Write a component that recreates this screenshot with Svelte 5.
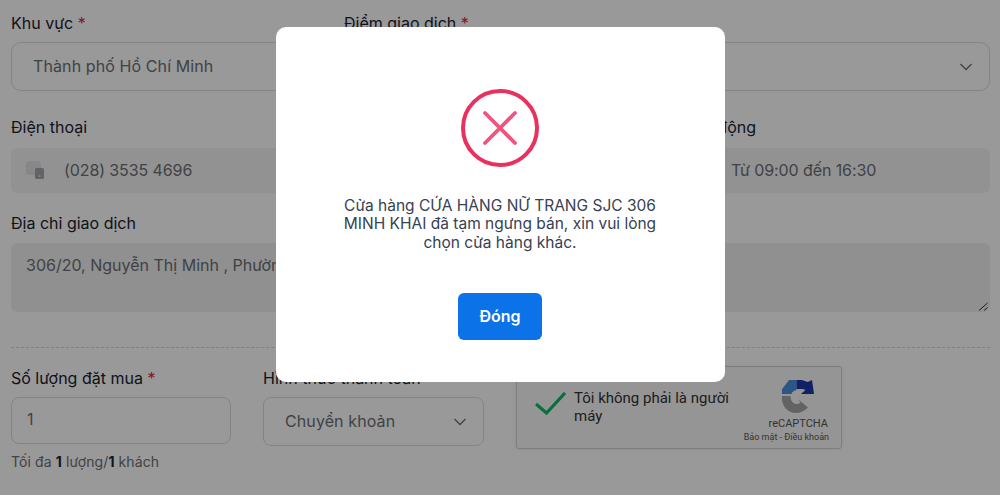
<script>
  let open = $state(true);
</script>

<style>
  :global(body) {
    background: #fff;
    font-family: Inter, "Noto Sans", sans-serif;
    color: #1f2937;
  }

  .form {
    padding: 11px 10px 0 11px;
  }

  .row {
    display: grid;
    grid-template-columns: repeat(3, 1fr);
    column-gap: 20px;
  }

  .row-phone {
    margin-top: 24px;
  }

  .row-address {
    margin-top: 18px;
  }

  .span-2 {
    grid-column: span 2;
  }

  label {
    display: block;
    font-size: 16px;
    line-height: 24px;
    color: #1a2230;
  }

  label span {
    color: #e11d48;
  }

  .select {
    position: relative;
    margin-top: 7px;
  }

  select {
    display: block;
    width: 100%;
    height: 49px;
    box-sizing: border-box;
    padding: 0 40px 2px 21px;
    appearance: none;
    background: #fff;
    border: 1px solid #dcdcdf;
    border-radius: 10px;
    font: 16px Inter, sans-serif;
    letter-spacing: 0.1px;
    color: #6c6e75;
  }

  .select svg {
    position: absolute;
    right: 17px;
    top: 50%;
    margin-top: -4px;
    pointer-events: none;
  }

  .static {
    display: flex;
    align-items: center;
    height: 45px;
    box-sizing: border-box;
    margin-top: 9px;
    padding: 0 0 2px 15px;
    border-radius: 6px;
    background: #f4f4f4;
    font-size: 16px;
    letter-spacing: -0.1px;
    color: #6c6e75;
  }

  .static svg {
    margin-right: 18px;
  }

  .no-icon {
    padding-left: 54px;
  }

  .area {
    position: relative;
    margin-top: 8px;
  }

  textarea {
    display: block;
    width: 100%;
    height: 69px;
    box-sizing: border-box;
    padding: 10px 15px;
    border: 0;
    border-radius: 6px;
    background: #f0f0f0;
    font: 16px/24px Inter, sans-serif;
    color: #6c6e75;
    resize: none;
  }

  .area svg {
    position: absolute;
    right: 1px;
    bottom: 1px;
    pointer-events: none;
  }

  .divider {
    margin: 35px 0 18px;
    border-top: 1px dashed #d4d4d6;
  }

  .row-order {
    display: grid;
    grid-template-columns: 220px 221px 326px;
    column-gap: 32px;
    align-items: start;
  }

  .qty {
    display: block;
    width: 100%;
    height: 47px;
    box-sizing: border-box;
    margin-top: 7px;
    padding: 0 15px 3px;
    background: #fff;
    border: 1px solid #dcdcdf;
    border-radius: 8px;
    font: 16px Inter, sans-serif;
    color: #6c6e75;
  }

  .row-order select {
    height: 49px;
    border-radius: 8px;
  }

  .hint {
    margin: 9px 0 0;
    font-size: 14px;
    line-height: 18px;
    letter-spacing: 0.1px;
    color: #6c6e75;
  }

  .hint b {
    color: #1a2230;
  }

  .captcha {
    display: flex;
    box-sizing: border-box;
    height: 83px;
    padding: 23px 12px 0 18px;
    background: #f9f9f9;
    border: 1px solid #d3d3d3;
    border-radius: 3px;
    box-shadow: 0 0 4px rgba(0, 0, 0, 0.08);
    font-family: Roboto, sans-serif;
  }

  .captcha-check {
    flex: none;
    margin-top: 2px;
  }

  .captcha-text {
    width: 170px;
    margin-left: 7px;
    font-size: 15px;
    line-height: 17.5px;
    color: #333;
  }

  .captcha-brand {
    margin: -10px 0 0 auto;
    text-align: right;
    color: #555;
  }

  .captcha-brand svg {
    display: block;
    margin: 0 15px 0 auto;
  }

  .captcha-name {
    margin: 4px 1px 0 0;
    font-size: 11px;
    line-height: 14px;
  }

  .captcha-links {
    font-size: 9px;
    line-height: 13px;
    white-space: nowrap;
  }

  .overlay {
    position: fixed;
    inset: 0;
    display: flex;
    justify-content: center;
    align-items: flex-start;
    padding-top: 27px;
    background: rgba(0, 0, 0, 0.4);
  }

  .modal {
    width: 449px;
    height: 355px;
    box-sizing: border-box;
    padding: 62px 50px 0;
    background: #fff;
    border-radius: 10px;
    text-align: center;
  }

  .modal svg {
    display: block;
    margin: 0 auto;
  }

  .modal p {
    margin: 29.5px 0 0;
    font-size: 15.5px;
    line-height: 18.5px;
    color: #374151;
  }

  .modal button {
    width: 84px;
    height: 47px;
    margin-top: 40.5px;
    border: 0;
    border-radius: 6px;
    background: #0b72e7;
    color: #fff;
    font: 600 16px Inter, sans-serif;
  }
</style>

<div class="form">
  <div class="row">
    <div>
      <label for="area">Khu vực <span>*</span></label>
      <div class="select">
        <select id="area">
          <option>Thành phố Hồ Chí Minh</option>
        </select>
        <svg width="14" height="8" viewBox="0 0 14 8" fill="none" stroke="#6c6e75" stroke-width="1.3"><path d="M1.5 1l5.5 5.5L12.5 1" /></svg>
      </div>
    </div>
    <div class="span-2">
      <label for="shop">Điểm giao dịch <span>*</span></label>
      <div class="select">
        <select id="shop">
          <option>CỬA HÀNG NỮ TRANG SJC 306 MINH KHAI</option>
        </select>
        <svg width="14" height="8" viewBox="0 0 14 8" fill="none" stroke="#6c6e75" stroke-width="1.3"><path d="M1.5 1l5.5 5.5L12.5 1" /></svg>
      </div>
    </div>
  </div>

  <div class="row row-phone">
    <div>
      <label for="phone">Điện thoại</label>
      <div class="static" id="phone">
        <svg width="20" height="20" viewBox="0 0 20 20">
          <rect x="0" y="1" width="15" height="14" rx="3.5" fill="#e2e2e4" />
          <rect x="9" y="8" width="9" height="11" rx="1.5" fill="#a3a5aa" />
          <circle cx="13.5" cy="16" r="1" fill="#e2e2e4" />
        </svg>
        (028) 3535 4696
      </div>
    </div>
    <div></div>
    <div>
      <label for="hours">Hoạt động</label>
      <div class="static no-icon" id="hours">Từ 09:00 đến 16:30</div>
    </div>
  </div>

  <div class="row-address">
    <label for="address">Địa chỉ giao dịch</label>
    <div class="area">
      <textarea id="address" readonly>306/20, Nguyễn Thị Minh , Phường</textarea>
      <svg width="11" height="9" viewBox="0 0 11 9" fill="none" stroke="#333" stroke-width="1"><path d="M1 8.5L9.5 1M6 8.5L9.5 5.5" /></svg>
    </div>
  </div>

  <div class="divider"></div>

  <div class="row-order">
    <div>
      <label for="qty">Số lượng đặt mua <span>*</span></label>
      <input class="qty" id="qty" value="1" />
      <p class="hint">Tối đa <b>1</b> lượng/<b>1</b> khách</p>
    </div>
    <div>
      <label for="pay">Hình thức thanh toán</label>
      <div class="select">
        <select id="pay">
          <option>Chuyển khoản</option>
        </select>
        <svg width="14" height="8" viewBox="0 0 14 8" fill="none" stroke="#6c6e75" stroke-width="1.3"><path d="M1.5 1l5.5 5.5L12.5 1" /></svg>
      </div>
    </div>
    <div class="captcha">
      <svg class="captcha-check" width="32" height="24" viewBox="0 0 32 24" fill="none" stroke="#12b76a" stroke-width="3.2"><path d="M1 12l10.5 9L30 1" /></svg>
      <div class="captcha-text">Tôi không phải là người máy</div>
      <div class="captcha-brand">
        <svg width="32" height="33" viewBox="0 0 32 33">
          <path d="M14.5 0H7L0 9.3V14h9.500C10 12 12 10.500 14.500 10z" fill="#4a90e2" />
          <path d="M14.500 0H20l5.700 2L30 0l2 14H19l4.500-4C21.500 8.500 18 9 14.500 9z" fill="#1c3aa9" />
          <path d="M0 16h8.500c0 4 2 7.500 5.500 8 2 .3 3.500-.5 4.500-1.500L16.500 19.500 26 27.500C22.500 31 18.500 33 14 33 6 33 1 27 0 20z" fill="#a6a6a6" />
        </svg>
        <div class="captcha-name">reCAPTCHA</div>
        <div class="captcha-links">Bảo mật - Điều khoản</div>
      </div>
    </div>
  </div>
</div>

{#if open}
  <div class="overlay">
    <div class="modal">
      <svg width="78" height="78" viewBox="0 0 78 78" fill="none">
        <circle cx="39" cy="39" r="37" stroke="#e8315f" stroke-width="4" />
        <path d="M24 24l30 30M54 24L24 54" stroke="#f1557f" stroke-width="3.8" stroke-linecap="round" />
      </svg>
      <p>Cửa hàng CỨA HÀNG NỮ TRANG SJC 306 MINH KHAI đã tạm ngưng bán, xin vui lòng chọn cửa hàng khác.</p>
      <button onclick={() => (open = false)}>Đóng</button>
    </div>
  </div>
{/if}
